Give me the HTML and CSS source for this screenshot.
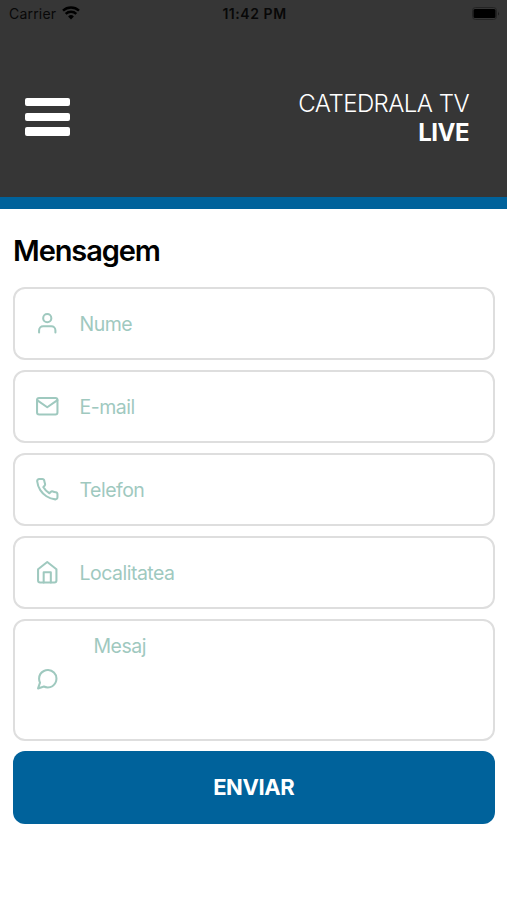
FILE: index.html
```html
<!DOCTYPE html>
<html lang="ro">
<head>
<meta charset="utf-8">
<meta name="viewport" content="width=device-width, initial-scale=1">
<title>Catedrala TV Live</title>
<link rel="stylesheet" href="styles.css">
</head>
<body>
<header class="header">
  <div class="status">
    <div class="carrier"><span class="carrier-name">Carrier</span>
      <svg class="wifi" viewBox="0 0 18 14"><path d="M9 13.6 6.1 10.5a4.2 4.2 0 0 1 5.8 0z"/><path class="arc" d="M3.7 7.8a7.7 7.7 0 0 1 10.6 0M1 4.7a11.7 11.7 0 0 1 16 0"/></svg>
    </div>
    <time class="clock">11:42 PM</time>
    <div class="power"><svg class="battery" viewBox="0 0 28 13"><rect class="case" x=".5" y=".5" width="24" height="12" rx="3"/><rect x="1.5" y="2" width="22" height="9" rx="1.5"/><path class="cap" d="M26 4.5q1.8 2 0 4z"/></svg></div>
  </div>
  <div class="bar">
    <button class="menu" aria-label="Menu"><span></span><span></span><span></span></button>
    <div class="brand"><span class="brand-name">CATEDRALA TV</span><strong class="brand-live">LIVE</strong></div>
  </div>
</header>
<main class="content">
  <h1 class="title">Mensagem</h1>
  <form class="form">
    <label class="field">
      <svg class="icon" viewBox="0 0 24 24"><path d="M20 21v-2a4 4 0 0 0-4-4H8a4 4 0 0 0-4 4v2"/><circle cx="12" cy="7" r="4"/></svg>
      <span class="name">Nume</span>
    </label>
    <label class="field">
      <svg class="icon" viewBox="0 0 24 24"><rect x="2" y="4" width="20" height="16" rx="2"/><path d="m22 6-10 7L2 6"/></svg>
      <span class="name">E-mail</span>
    </label>
    <label class="field">
      <svg class="icon" viewBox="0 0 24 24"><path d="M22 16.92v3a2 2 0 0 1-2.18 2 19.79 19.79 0 0 1-8.63-3.07 19.5 19.5 0 0 1-6-6 19.79 19.79 0 0 1-3.07-8.67A2 2 0 0 1 4.11 2h3a2 2 0 0 1 2 1.72c.13.96.36 1.9.7 2.81a2 2 0 0 1-.45 2.11L8.09 9.91a16 16 0 0 0 6 6l1.27-1.27a2 2 0 0 1 2.11-.45c.91.34 1.85.57 2.81.7A2 2 0 0 1 22 16.92z"/></svg>
      <span class="name">Telefon</span>
    </label>
    <label class="field">
      <svg class="icon" viewBox="0 0 24 24"><path d="m3 9 9-7 9 7v11a2 2 0 0 1-2 2H5a2 2 0 0 1-2-2z"/><path d="M8.5 22V12h7v10"/></svg>
      <span class="name">Localitatea</span>
    </label>
    <label class="field message">
      <svg class="icon" viewBox="0 0 24 24"><path d="M21 11.5a8.38 8.38 0 0 1-.9 3.8 8.5 8.5 0 0 1-7.6 4.7 8.38 8.38 0 0 1-3.8-.9L3 21l1.9-5.7a8.38 8.38 0 0 1-.9-3.8 8.5 8.5 0 0 1 4.7-7.6 8.38 8.38 0 0 1 3.8-.9h.5a8.48 8.48 0 0 1 8 8z"/></svg>
      <span class="name">Mesaj</span>
    </label>
    <button class="send" type="button">ENVIAR</button>
  </form>
</main>
</body>
</html>
```
FILE: styles.css
```css
* { box-sizing: border-box; }
body {
  margin: 0;
  min-height: 900px;
  background: #fff;
  font-family: Inter, "Liberation Sans", sans-serif;
}
button { border: 0; padding: 0; font-family: inherit; }

.header {
  height: 208.5px;
  background: #363636;
  border-bottom: 12px solid #00629b;
}
.status {
  display: grid;
  grid-template-columns: 1fr auto 1fr;
  align-items: center;
  height: 28px;
  padding: 0 7px 0 9px;
  color: #080808;
  font-size: 14px;
  line-height: 28px;
}
.carrier { display: flex; align-items: center; gap: 6px; }
.carrier-name { letter-spacing: 0.2px; }
.wifi { width: 18px; height: 14px; margin-top: -2px; fill: #000; }
.wifi .arc { fill: none; stroke: #000; stroke-width: 2.4; }
.clock { font-weight: 600; letter-spacing: 0.55px; }
.power { display: flex; justify-content: flex-end; }
.battery { width: 28px; height: 13px; margin-top: -2px; fill: #000; }
.battery .case { fill: none; stroke: #242424; }
.battery .cap { fill: #1c1c1c; }

.bar {
  display: flex;
  justify-content: space-between;
  align-items: flex-start;
  padding: 61px 38px 0 25px;
}
.menu {
  display: grid;
  gap: 6.5px;
  width: 45px;
  margin-top: 9px;
  background: none;
}
.menu span { height: 8.2px; border-radius: 2px; background: #fff; }
.brand {
  display: flex;
  flex-direction: column;
  align-items: flex-end;
  color: #fff;
  font-size: 24px;
  line-height: 29px;
}
.brand-name { font-weight: 300; letter-spacing: -0.55px; }
.brand-live { font-weight: 700; letter-spacing: -0.5px; }

.content { padding: 24.5px 12.5px 0 13px; }
.title {
  margin: 0;
  height: 53.5px;
  color: #000;
  font-size: 29px;
  font-weight: 600;
  line-height: 36px;
  letter-spacing: -1.1px;
}
.form { display: flex; flex-direction: column; gap: 10px; }
.field {
  display: flex;
  align-items: center;
  gap: 20px;
  height: 73px;
  padding-left: 20px;
  border: 2px solid #dedede;
  border-radius: 12px;
  color: #9fc9bf;
  font-size: 19.5px;
  line-height: 24px;
}
.name { margin-top: 2px; letter-spacing: -0.5px; }
.icon {
  flex: none;
  width: 24.5px;
  height: 24.5px;
  fill: none;
  stroke: currentColor;
  stroke-width: 2;
  stroke-linecap: round;
  stroke-linejoin: round;
}
.message { height: 122px; }
.message .name { align-self: flex-start; margin: 13px 0 0 14px; }
.send {
  height: 73.5px;
  border-radius: 12px;
  background: #00629b;
  color: #fff;
  font-size: 22px;
  font-weight: 700;
  letter-spacing: -0.4px;
}
```
